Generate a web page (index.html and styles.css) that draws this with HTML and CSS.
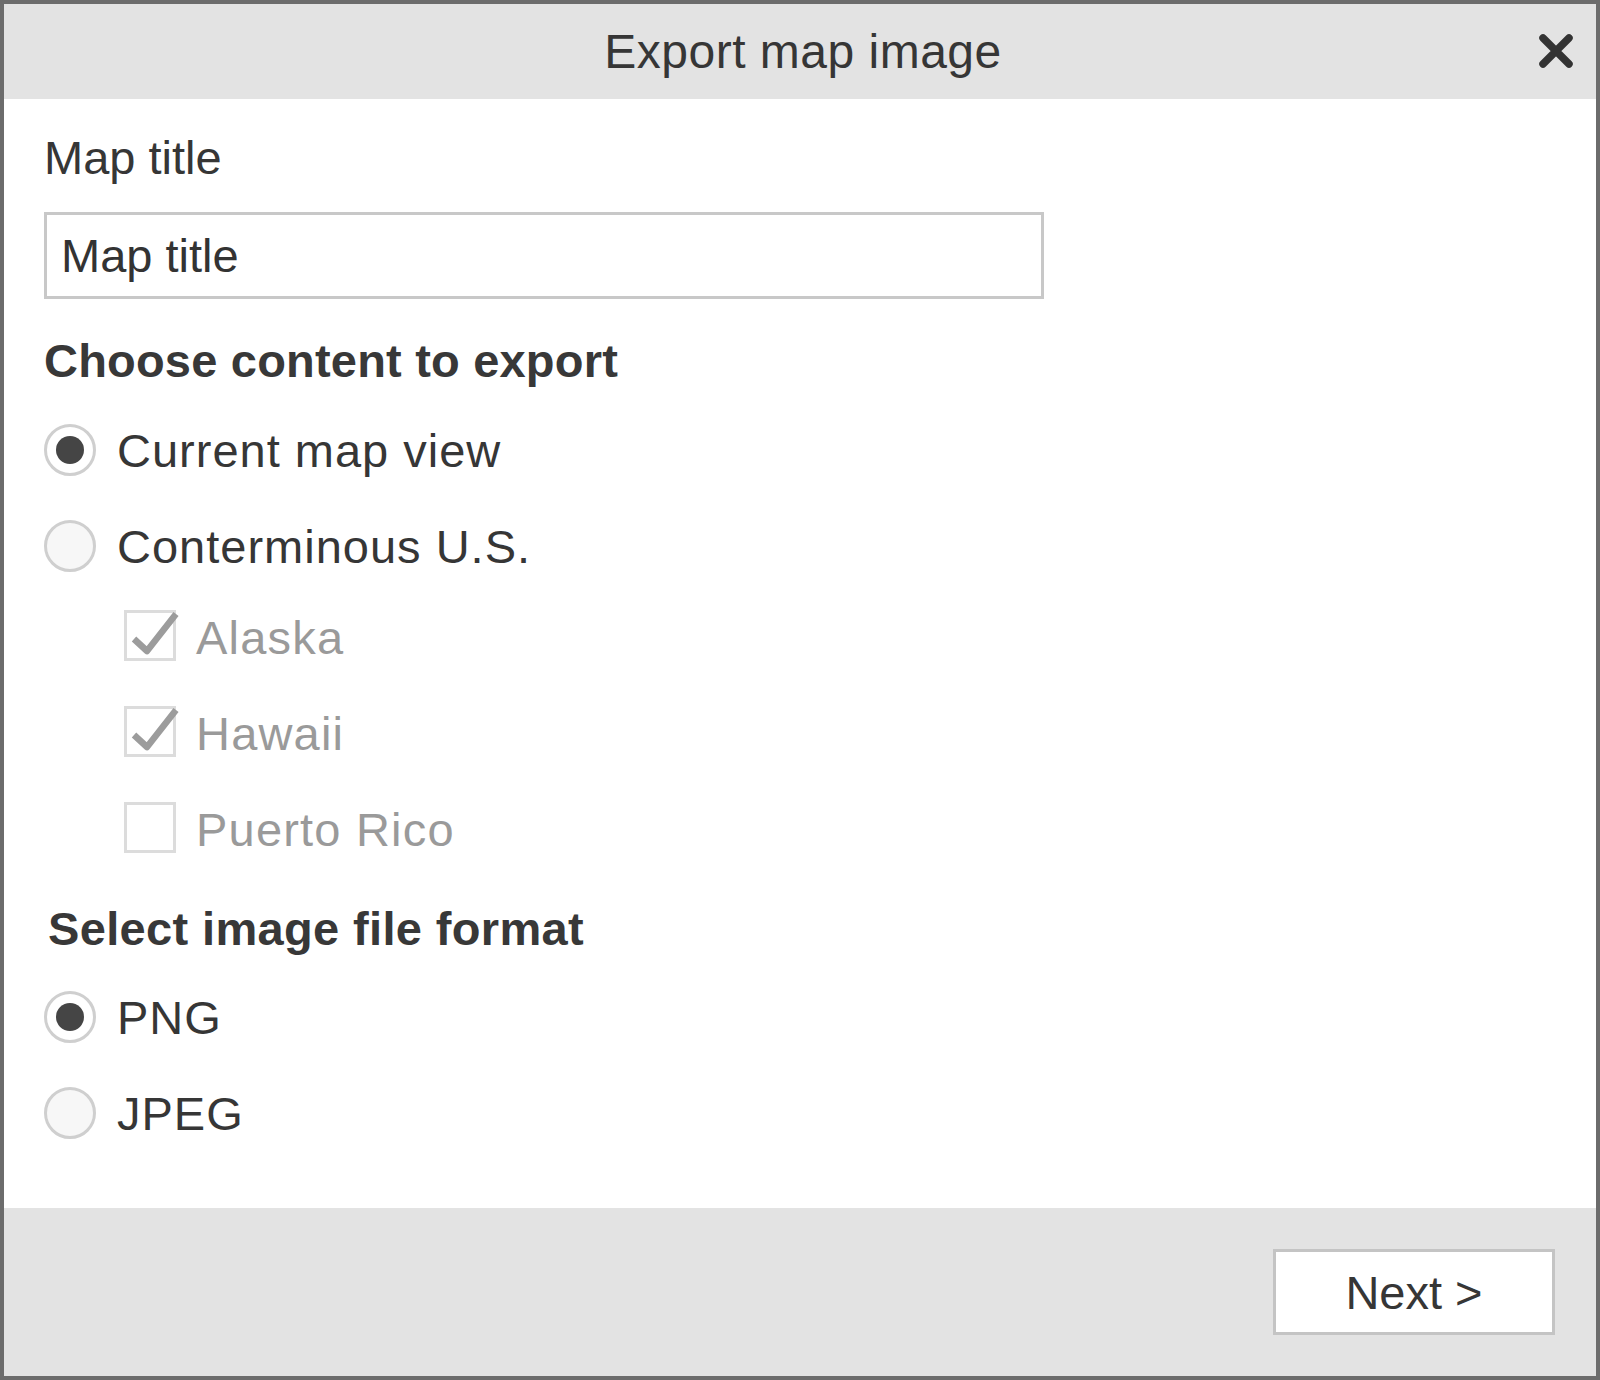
FILE: index.html
```html
<!DOCTYPE html>
<html>
<head>
<meta charset="utf-8">
<title>Export map image</title>
<link rel="stylesheet" href="styles.css">
</head>
<body>
<div class="dialog">
  <div class="header">
    <span class="title">Export map image</span>
    <span class="close" aria-label="Close">
      <svg width="36" height="36" viewBox="0 0 36 36"><path d="M5 5 L31 31 M31 5 L5 31" stroke="#333" stroke-width="7.5" stroke-linecap="round"/></svg>
    </span>
  </div>
  <div class="body">
    <div class="label">Map title</div>
    <div class="input">Map title</div>
    <div class="heading">Choose content to export</div>
    <div class="opt"><span class="radio checked"></span><span class="txt">Current map view</span></div>
    <div class="opt"><span class="radio"></span><span class="txt">Conterminous U.S.</span></div>
    <div class="sub">
      <div class="opt cbopt">
        <svg class="cb" width="60" height="56" viewBox="0 0 60 56"><rect x="1.5" y="5.5" width="49" height="48" fill="#fff" stroke="#dcdcdc" stroke-width="3"/><path d="M10 33 L23 45 L52 8" fill="none" stroke="#9c9c9c" stroke-width="6.5" stroke-linejoin="round"/></svg>
        <span class="txt">Alaska</span>
      </div>
      <div class="opt cbopt">
        <svg class="cb" width="60" height="56" viewBox="0 0 60 56"><rect x="1.5" y="5.5" width="49" height="48" fill="#fff" stroke="#dcdcdc" stroke-width="3"/><path d="M10 33 L23 45 L52 8" fill="none" stroke="#9c9c9c" stroke-width="6.5" stroke-linejoin="round"/></svg>
        <span class="txt">Hawaii</span>
      </div>
      <div class="opt cbopt">
        <svg class="cb" width="60" height="56" viewBox="0 0 60 56"><rect x="1.5" y="5.5" width="49" height="48" fill="#fff" stroke="#dcdcdc" stroke-width="3"/></svg>
        <span class="txt">Puerto Rico</span>
      </div>
    </div>
    <div class="heading heading2">Select image file format</div>
    <div class="opt"><span class="radio checked"></span><span class="txt">PNG</span></div>
    <div class="opt"><span class="radio"></span><span class="txt">JPEG</span></div>
  </div>
  <div class="footer">
    <button class="next">Next &gt;</button>
  </div>
</div>
</body>
</html>
```
FILE: styles.css
```css
* { box-sizing: border-box; }
html, body { margin: 0; padding: 0; background: #fff; }
body {
  font-family: "Liberation Sans", Arial, sans-serif;
  font-size: 47px;
  color: #363636;
}
.dialog {
  width: 1600px;
  height: 1380px;
  border: 4px solid #6c6c6c;
  display: flex;
  flex-direction: column;
  background: #fff;
}
.header {
  height: 95px;
  flex: none;
  background: #e3e3e3;
  display: flex;
  align-items: center;
  justify-content: center;
  position: relative;
}
.title {
  font-size: 48px;
  letter-spacing: 0.5px;
  color: #363636;
  margin-left: 6px;
}
.close {
  position: absolute;
  right: 22px;
  top: 29px;
  width: 36px;
  height: 36px;
}
.close svg { display: block; }
.body {
  flex: 1;
  padding: 29px 0 0 40px;
}
.label {
  height: 60px;
  line-height: 60px;
}
.input {
  margin-top: 24px;
  width: 1000px;
  height: 87px;
  border: 3px solid #c8c8c8;
  line-height: 81px;
  padding-left: 14px;
  color: #333;
}
.heading {
  margin-top: 32px;
  height: 60px;
  line-height: 60px;
  font-weight: bold;
  letter-spacing: 0.2px;
  color: #383838;
}
.heading2 {
  margin-top: 22px;
  padding-left: 4px;
  letter-spacing: 0.35px;
}
.opt {
  height: 96px;
  display: flex;
  align-items: center;
}
.heading + .opt { margin-top: 11px; }
.heading2 + .opt { margin-top: 10px; }
.radio {
  width: 52px;
  height: 52px;
  border-radius: 50%;
  border: 3px solid #cfcfcf;
  background: #f7f7f7;
  flex: none;
  display: flex;
  align-items: center;
  justify-content: center;
}
.radio.checked { background: #fff; }
.radio.checked::after {
  content: "";
  width: 28px;
  height: 28px;
  border-radius: 50%;
  background: #454545;
}
.opt .txt { margin-left: 21px; letter-spacing: 1px; }
.sub {
  margin-top: -5px;
  padding-left: 80px;
}
.cbopt .cb { flex: none; display: block; overflow: visible; margin-top: -6px; }
.cbopt .txt { margin-left: 12px; color: #9a9a9a; letter-spacing: 1.2px; }
.footer {
  height: 168px;
  flex: none;
  background: #e3e3e3;
  display: flex;
  align-items: center;
  justify-content: flex-end;
  padding-right: 41px;
}
.next {
  width: 282px;
  height: 86px;
  background: #fff;
  border: 3px solid #c4c4c4;
  font-family: "Liberation Sans", Arial, sans-serif;
  font-size: 47px;
  color: #363636;
  padding: 0;
}
```
